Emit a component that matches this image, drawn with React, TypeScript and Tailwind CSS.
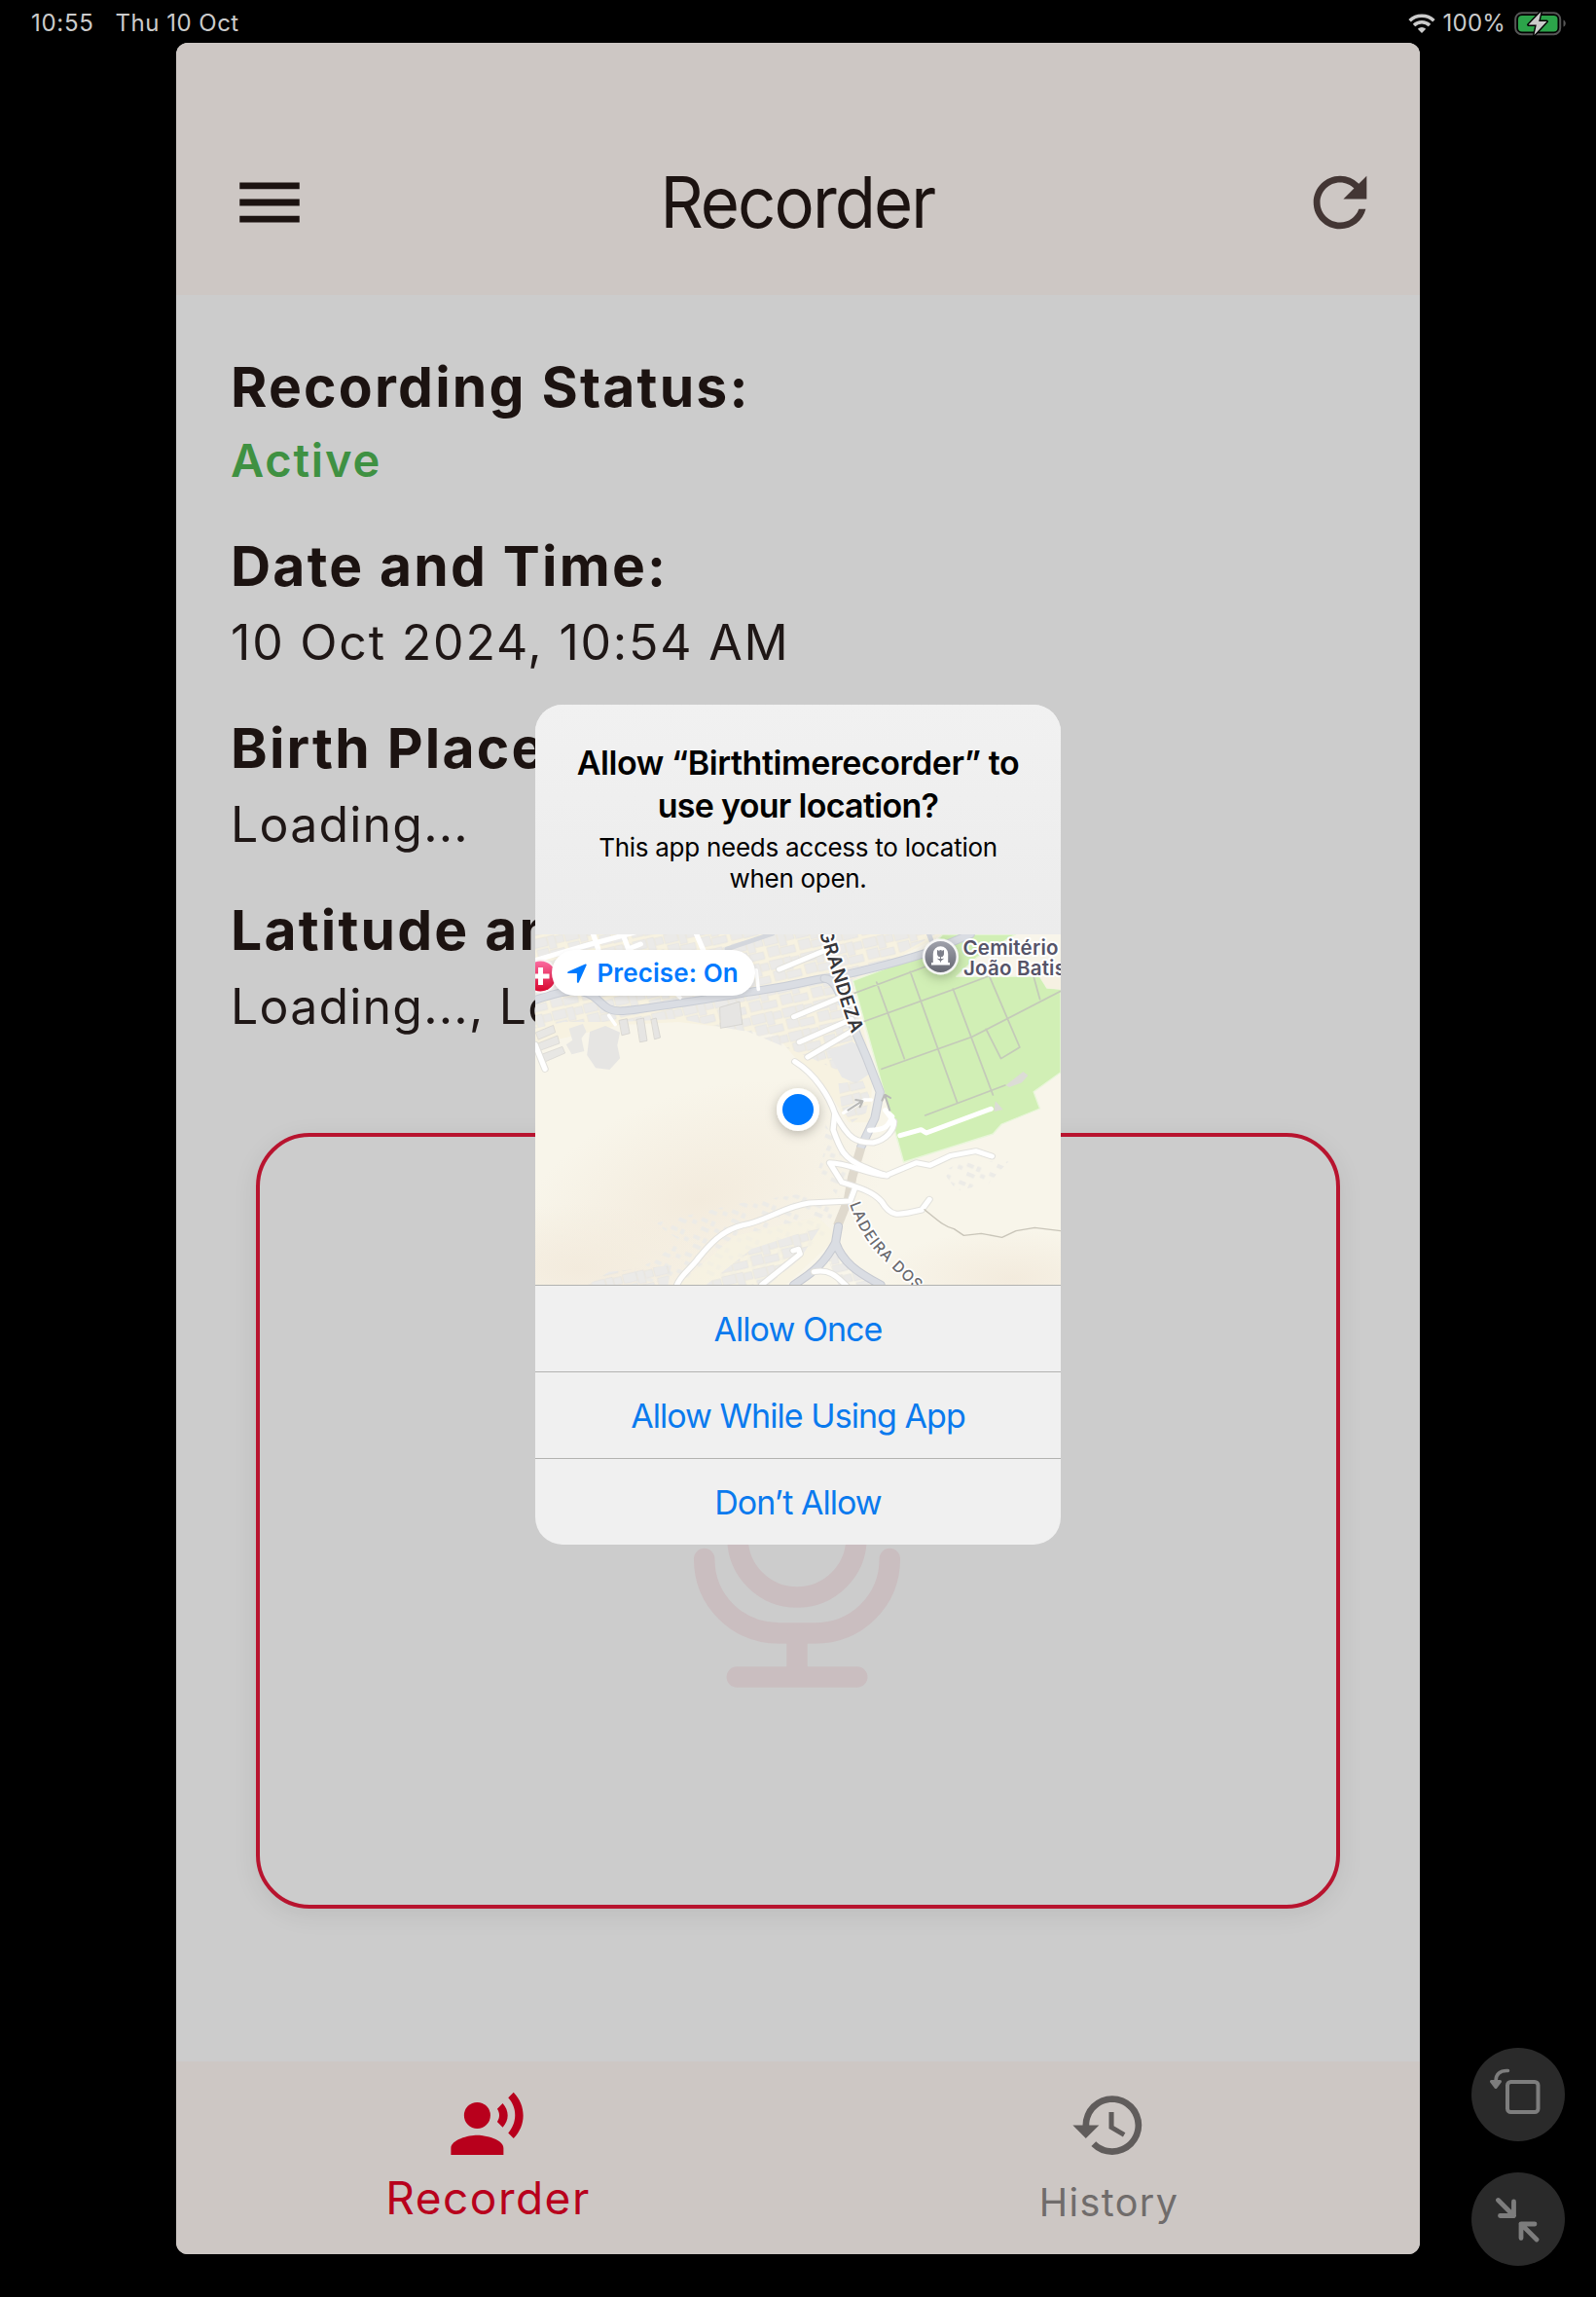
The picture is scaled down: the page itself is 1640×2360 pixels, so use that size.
import type { ReactNode } from "react";

function StatusBar() {
  return (
    <header className="flex h-11 w-full shrink-0 items-center justify-between pt-1 pr-[30px] pl-[32px] text-[24px] leading-[32px] text-[#cbcbcb]">
      <div className="flex gap-[22px]">
        <span className="tracking-[0.700px]">10:55</span>
        <span className="tracking-[0.500px]">Thu 10 Oct</span>
      </div>
      <div className="flex items-center">
        <svg className="h-[20px] w-[28px]" viewBox="0 0 28 20" fill="none">
          <path d="M1.600 7.200a18 18 0 0 1 24.800 0" stroke="#cbcbcb" strokeWidth="3.600" />
          <path d="M6 12a11.600 11.600 0 0 1 16 0" stroke="#cbcbcb" strokeWidth="3.600" />
          <path d="M14 20l-4.200-4.300a6 6 0 0 1 8.400 0z" fill="#cbcbcb" />
        </svg>
        <span className="ml-[8px] tracking-[0.200px]">100%</span>
        <svg className="ml-[9px] h-[26px] w-[54px]" viewBox="0 0 54 26">
          <rect x="1.200" y="2.200" width="46" height="22" rx="6.500" fill="none" stroke="#565656" strokeWidth="2" />
          <path d="M50.500 9.500c3 1 3 6 0 7z" fill="#565656" />
          <rect x="4" y="5" width="40.500" height="16.500" rx="4" fill="#2ca44a" />
          <path d="M27.500 1 14.500 14.500h8.300L20.500 25 33.500 11h-8.300z" fill="#cbcbcb" stroke="#000" strokeWidth="2.800" strokeLinejoin="round" paintOrder="stroke" />
        </svg>
      </div>
    </header>
  );
}

function AppBar() {
  return (
    <div className="flex h-[259px] shrink-0 items-end justify-between bg-[#cdc7c4] pr-[41px] pb-[54px] pl-[55px]">
      <svg className="h-[82px] w-[82px]" viewBox="0 0 24 24" fill="#1c1311">
        <path d="M3 18h18v-2H3zm0-5h18v-2H3zm0-7v2h18V6z" />
      </svg>
      <h1 className="mr-[15px] origin-center scale-x-95 text-[72.500px] leading-[82px] tracking-[-2px] text-[#1c1311]">Recorder</h1>
      <svg className="h-[82px] w-[82px]" viewBox="0 0 24 24" fill="#433634">
        <path d="M17.650 6.350A7.958 7.958 0 0 0 12 4c-4.420 0-7.990 3.580-7.990 8s3.570 8 7.990 8c3.730 0 6.840-2.550 7.730-6h-2.080A5.990 5.990 0 0 1 12 18c-3.310 0-6-2.690-6-6s2.690-6 6-6c1.660 0 3.140.690 4.220 1.780L13 11h7V4z" />
      </svg>
    </div>
  );
}

function Heading({ children }: { children: string }) {
  return <h2 className="text-[57px] leading-[65px] font-bold tracking-[2.200px] text-[#1c1311]">{children}</h2>;
}

function Details() {
  return (
    <section className="flex flex-col pt-[62px] pl-[56px] whitespace-nowrap text-[#1f1716]">
      <div className="h-[184px]">
        <Heading>Recording Status:</Heading>
        <p className="mt-[13px] text-[47px] leading-[60px] font-semibold tracking-[1.800px] text-[#3f9142]">Active</p>
      </div>
      <div className="h-[187px]">
        <Heading>Date and Time:</Heading>
        <p className="mt-[16px] text-[50px] leading-[60px] tracking-[1.800px]">10 Oct 2024, 10:54 AM</p>
      </div>
      <div className="h-[187px]">
        <Heading>Birth Place:</Heading>
        <p className="mt-[16px] text-[50px] leading-[60px] tracking-[1.200px]">Loading...</p>
      </div>
      <div className="h-[187px]">
        <Heading>Latitude and Longitude:</Heading>
        <p className="mt-[16px] text-[50px] leading-[60px] tracking-[1.200px]">Loading..., Loading...</p>
      </div>
    </section>
  );
}

function RecordCard() {
  return (
    <div className="mx-[82px] mt-[54px] flex h-[797px] shrink-0 items-end justify-center rounded-[55px] border-4 border-[#b8142f] bg-[#cccccc] pb-[223px] shadow-[0_6px_26px_rgba(0,0,0,0.08)]">
      <svg className="mr-[2px] h-[280px] w-[224px]" viewBox="0 0 224 280" fill="none" stroke="#cabec0" strokeWidth="21.500" strokeLinecap="round" strokeLinejoin="round">
        <path d="M51 60a61 61 0 0 1 122 0v66a61 61 0 0 1-122 0z" />
        <path d="M16.700 147.500c0 43 34 76.500 77 76.500h36.600c43 0 77-33.500 77-76.500" />
        <path d="M112 226v40M50.300 269h123.400" />
      </svg>
    </div>
  );
}

function NavItem({ icon, children }: { icon: ReactNode; children: ReactNode }) {
  return (
    <div className="flex w-1/2 flex-col items-center">
      {icon}
      {children}
    </div>
  );
}

function BottomNav() {
  return (
    <nav className="mt-auto flex h-[198px] shrink-0 bg-[#cdc7c4] pt-[25px]">
      <NavItem
        icon={
          <svg className="h-[81px] w-[81px]" viewBox="0 0 24 24" fill="#b8001c">
            <circle cx="9" cy="9" r="4" />
            <path d="M9 15c-2.670 0-8 1.340-8 4v2h16v-2c0-2.660-5.330-4-8-4zm7.760-9.640-1.680 1.690c.84 1.180.84 2.710 0 3.890l1.680 1.690c2.020-2.020 2.020-5.070 0-7.270zM20.070 2l-1.630 1.630c2.770 3.020 2.770 7.560 0 10.740L20.070 16c3.900-3.890 3.910-9.950 0-14z" />
          </svg>
        }
      >
        <span className="mt-[4px] ml-[2px] text-[46px] leading-[60px] tracking-[1.500px] text-[#b8001c]">Recorder</span>
      </NavItem>
      <NavItem
        icon={
          <svg className="h-[81px] w-[81px]" viewBox="0 0 24 24" fill="#605c5b">
            <path d="M13 3a9 9 0 0 0-9 9H1l3.890 3.890.07.14L9 12H6c0-3.870 3.130-7 7-7s7 3.130 7 7-3.130 7-7 7c-1.930 0-3.680-.790-4.940-2.060l-1.420 1.420A8.954 8.954 0 0 0 13 21a9 9 0 0 0 0-18zm-1 5v5l4.280 2.540.720-1.210-3.500-2.080V8z" />
          </svg>
        }
      >
        <span className="mt-[9px] text-[39.500px] leading-[60px] tracking-[1.400px] text-[#706c6b]">History</span>
      </NavItem>
    </nav>
  );
}

/* Roads and buildings share one coordinate space of 1512 x 1080 starting at (28, 60). */
function MapArt() {
  return (
    <svg className="absolute inset-0 h-full w-full" viewBox="28 60 1512 1080" preserveAspectRatio="none" fill="none" strokeLinejoin="round" strokeLinecap="round">
      <defs>
        <radialGradient id="hill" cx="0.500" cy="0.500" r="0.500">
          <stop offset="0" stopColor="#f3ebdd" />
          <stop offset="1" stopColor="#f3ebdd" stopOpacity="0" />
        </radialGradient>
        <pattern id="blocks" width="92" height="76" patternUnits="userSpaceOnUse" patternTransform="rotate(-14)">
          <path d="M2 4h38v28H2zM44 4h20v40H44zM67 8h22v22H67zM6 38h32v30H6zM42 48h42v22H42z" fill="#ebeae8" stroke="#e2e0dc" strokeWidth="1.500" />
        </pattern>
        <pattern id="specks" width="70" height="58" patternUnits="userSpaceOnUse" patternTransform="rotate(24)">
          <path d="M4 6h20v12H4zM34 4h12v16H34zM52 22h14v12H52zM14 32h24v12H14z" fill="#ecebe7" />
        </pattern>
      </defs>
      <rect x="28" y="60" width="1512" height="1080" fill="#f8f5ea" />
      <ellipse cx="500" cy="880" rx="560" ry="330" fill="url(#hill)" transform="rotate(-22 500 880)" />
      <ellipse cx="150" cy="1090" rx="420" ry="200" fill="url(#hill)" />
      <ellipse cx="1400" cy="1120" rx="380" ry="150" fill="url(#hill)" />

      <path d="M28 60H1200L940 205 1000 480 990 640 930 640 880 560 800 470 720 370 560 345 440 330 270 340 28 400z" fill="#f7f2e1" />
      <path d="M28 60H1180L940 200 975 430 960 500 900 480 820 440 640 360 560 345 440 320 270 330 110 330 28 350z" fill="url(#blocks)" />
      <path d="M870 420l70-30 45 40 5 60-40 30-40-20z" fill="#e8e8e8" />
      <path d="M185 360l45-18 42 20-8 40 8 40-30 35-40-5-25-40z" fill="#e6e5e3" />
      <path d="M125 350l40-14 10 24-14 20 8 40-36 10-16-30 18-14z" fill="#e8e7e4" />
      <path d="M270 325l22-5 8 45-22 6zM320 322l20-4 10 70-20 4zM362 322l14-4 12 60-16 5zM560 285l56-18 8 70-62 12z" fill="#e6e5e3" stroke="#cfcdc9" strokeWidth="2" />
      <path d="M30 362l50-22 6 22-48 22zM36 396l56-24 6 24-56 22zM46 430l60-24 8 20-56 26z" fill="#e8e7e4" stroke="#cfcdc9" strokeWidth="1.500" />
      <path d="M900 520l70-10 20 50-10 50-40 30-30-40z" fill="url(#blocks)" />
      <path d="M860 640l60 110 20 110-40 10-60-80 20-60z" fill="url(#specks)" />
      <path d="M1200 790l60-30 130 0-60 70-90 20z" fill="url(#specks)" />
      <path d="M230 1140l150-80 60-60-70-50 240-60 180-30 100 40-30 100-200 110z" fill="url(#specks)" />
      <path d="M440 1140l160-150 240-60 60 60-150 150z" fill="#f7f2e1" opacity="0.700" />
      <path d="M520 1140l130-110 200-70-60 100-90 80z" fill="url(#blocks)" />
      <path d="M900 1140l-30-80 30-30 110 110z" fill="url(#blocks)" />
      <path d="M180 1140l60-40 180-20-10 60z" fill="url(#blocks)" />

      <path d="M942 203 1150 120 1200 60H1410L1300 130 1240 190 1480 190 1500 225 1540 228V485L1462 545 1480 597 1370 645 1345 675 1088 762 1060 655z" fill="#d1efb5" stroke="#e9f6da" strokeWidth="4" />
      <path d="M1478 188l62-50v92l-40-4z" fill="#f6f1e2" />
      <path d="M942 243 1150 160M970 330 1230 230 1330 190M1025 475 1285 376 1540 235M1150 618 1380 525M1010 207 1090 443M1107 175 1242 578M1230 228 1345 555M1335 190 1422 408 1368 443 1325 352M1462 190 1480 260" stroke="#c4cab9" strokeWidth="5" />
      <path d="M1382 525l50-42 14 12-18 22-36 14zM1352 574l22 26-26 6z" fill="#dcdcd6" />

      <path d="M28 262C90 240 140 225 180 242S220 300 280 296 560 252 680 232 820 200 860 196 1060 150 1150 118L1280 60" stroke="#c9cdd5" strokeWidth="26" />
      <path d="M28 262C90 240 140 225 180 242S220 300 280 296 560 252 680 232 820 200 860 196 1060 150 1150 118L1280 60" stroke="#dadde3" strokeWidth="20" />
      <path d="M580 105 710 58M1160 58l18 50" stroke="#d4d7dd" strokeWidth="14" />
      <path d="M860 196c30 0 45 50 60 90l60 150 40 110-15 80-40 90" stroke="#cacdd4" strokeWidth="26" />
      <path d="M860 196c30 0 45 50 60 90l60 150 40 110-15 80-40 90" stroke="#dcdfe4" strokeWidth="20" />
      <path d="M965 718l-25 90-12 70-30 80" stroke="#dfd9cd" strokeWidth="26" strokeLinecap="butt" />
      <path d="M900 960l-8 50c20 60 60 90 130 130M892 1010c-30 60-60 90-120 130" stroke="#c6c9d1" strokeWidth="26" />
      <path d="M900 960l-8 50c20 60 60 90 130 130M892 1010c-30 60-60 90-120 130" stroke="#dadde3" strokeWidth="20" />

      <g stroke="#e2e1dc" strokeWidth="21">
        <path d="M436 1140c10-30 40-50 60-80 30-40 70-90 130-104 60-10 120-58 190-68l118-6 14-40" />
        <path d="M775 452c60 40 100 110 115 160l-5 50c20 60 30 90 90 115 30 15 60 25 65 25l84-38 40 8 60-30 72-14 46 16" />
        <path d="M890 612c40 80 60 90 110 90 40-10 60-40 60-65" />
        <path d="M1040 804c-60-5-110-40-165-40l35 60c60 20 90 30 115 60 25 45 40 45 115 25l22-32" />
        <path d="M28 400l28 75M730 168l140-62M772 314l140-62M788 392l150-70M812 438l140-88" />
        <path d="M680 1140l110-95-5-15-15 5M830 1100c50-10 70 20 95 45" />
      </g>
      <g stroke="#ffffff" strokeWidth="15">
        <path d="M28 400l28 75M28 140l160-50 140-40M195 60l14 45M280 60l16 45 35-15M492 60l20 50M730 168l140-62M772 314l140-62M788 392l150-70M812 438l140-88" />
        <path d="M664 170l6 60M425 235l20 20M240 310l18 28" strokeWidth="10" />
        <path d="M436 1140c10-30 40-50 60-80 30-40 70-90 130-104 60-10 120-58 190-68l118-6 14-40" />
        <path d="M775 452c60 40 100 110 115 160l-5 50c20 60 30 90 90 115 30 15 60 25 65 25l84-38 40 8 60-30 72-14 46 16" />
        <path d="M890 612c40 80 60 90 110 90 40-10 60-40 60-65l-25-35 20 20c-10 30-20 40-65 42" />
        <path d="M915 610l60-40 20 0" strokeWidth="10" />
        <path d="M1040 804c-60-5-110-40-165-40l35 60c60 20 90 30 115 60 25 45 40 45 115 25l22-32" />
        <path d="M1078 680l60-18 15 10 186-74" />
        <path d="M680 1140l110-95-5-15-15 5M830 1100c50-10 70 20 95 45" />
      </g>
      <path d="M1148 908c40 35 60 55 85 60l28 20 50-6 60 12 40-20 54-10 75 10" stroke="#c9c5b9" strokeWidth="4" />
      <path d="M928 602l40-28M950 570l20 4-8 18M1048 602l-14-46M1026 572l8-18 16 10" stroke="#b9b9b7" strokeWidth="6" />
    </svg>
  );
}

function MapLabels() {
  return (
    <svg className="absolute inset-0 h-full w-full font-['Inter']" viewBox="0 0 540 360">
      <defs>
        <path id="street-a" d="M291.500 -3 Q302 30 311 60 T337 132" />
        <path id="street-b" d="M323 277 Q334 309 352 328 T402 375" />
        <linearGradient id="hospital" x1="0" y1="0" x2="0" y2="1">
          <stop offset="0" stopColor="#fb6ba0" />
          <stop offset="1" stopColor="#d8062e" />
        </linearGradient>
        <linearGradient id="grave" x1="0" y1="0" x2="0" y2="1">
          <stop offset="0" stopColor="#9fa1ab" />
          <stop offset="1" stopColor="#666873" />
        </linearGradient>
        <filter id="soft" x="-50%" y="-50%" width="200%" height="200%">
          <feDropShadow dx="0" dy="3" stdDeviation="6" floodOpacity="0.250" />
        </filter>
      </defs>
      <text fontSize="19" fontWeight="600" fill="#36363a" stroke="#fff" strokeWidth="4" strokeLinejoin="round" paintOrder="stroke" letterSpacing="0.600">
        <textPath href="#street-a">GRANDEZA</textPath>
      </text>
      <text fontSize="15.500" fontWeight="500" fill="#6a6a6e" stroke="#fff" strokeWidth="3.500" strokeLinejoin="round" paintOrder="stroke" letterSpacing="1.150">
        <textPath href="#street-b">LADEIRA DOS</textPath>
      </text>
      <g fontSize="20.500" fontWeight="600" fill="#565468" stroke="#fff" strokeWidth="4" strokeLinejoin="round" paintOrder="stroke">
        <text x="439.500" y="20.500" letterSpacing="0.200">Cemitério</text>
        <text x="440" y="42" letterSpacing="0.200">João Batis</text>
      </g>
      <g filter="url(#soft)">
        <circle cx="416.500" cy="23" r="18.500" fill="#f6f6f6" />
      </g>
      <circle cx="416.500" cy="23" r="16" fill="url(#grave)" />
      <path d="M408.800 29V20a7.700 7.700 0 0 1 15.400 0v9h1.800v2.500h-19V29z" fill="#fff" />
      <path d="M413.500 16.500l1.500 1 1.500-1.500 1.500 1.500 1.500-1v3.500a3 3 0 0 1-6 0zM416.500 22v6.500M413.500 25l3 2 3-2" fill="#7d7f8a" stroke="#7d7f8a" strokeWidth="1" />
      <circle cx="5.500" cy="43" r="17.500" fill="#f9f3f3" />
      <circle cx="5.500" cy="43" r="15.500" fill="url(#hospital)" />
      <path d="M5.500 34v18M-3.500 43h18" stroke="#fff" strokeWidth="5" />
      <circle cx="270" cy="180" r="22" fill="#fff" filter="url(#soft)" />
      <circle cx="270" cy="180" r="16" fill="#007aff" />
    </svg>
  );
}

function MapPreview() {
  return (
    <div className="relative h-[360px] shrink-0 overflow-hidden">
      <MapArt />
      <MapLabels />
      <div className="absolute top-4 left-[17px] flex h-[47px] w-[209px] items-center rounded-full bg-white pl-[16px] shadow-[0_2px_5px_rgba(0,0,0,0.1)]">
        <svg className="h-5 w-5" viewBox="0 0 20 20" fill="#007aff">
          <path d="M18.400.6c1-.4 1.600.2 1.200 1.200l-7.800 17.400c-.5 1-1.900.8-1.900-.4V10.600c0-.3-.2-.5-.5-.5H1.200C0 10.100-.2 8.700.8 8.200z" />
        </svg>
        <span className="ml-[10.500px] text-[26px] leading-[32px] font-semibold tracking-[0.100px] whitespace-nowrap text-[#007aff]">Precise: On</span>
      </div>
    </div>
  );
}

function PermissionDialog() {
  return (
    <div className="absolute top-[680px] left-[369px] flex h-[863px] w-[540px] flex-col overflow-hidden rounded-[28px] bg-[#f0f0f0]">
      <div className="flex h-[236px] shrink-0 flex-col items-center bg-linear-to-b from-[#f1f1f1] to-[#ececec] pt-[38px] text-black">
        <div className="text-center text-[34px] leading-[44px] font-semibold">
          <p className="tracking-[-0.420px]">Allow “Birthtimerecorder” to</p>
          <p className="tracking-[-0.700px]">use your location?</p>
        </div>
        <div className="mt-[5px] text-center text-[26px] leading-[32px]">
          <p className="tracking-[-0.270px]">This app needs access to location</p>
          <p className="tracking-[-0.300px]">when open.</p>
        </div>
      </div>
      <MapPreview />
      {["Allow Once", "Allow While Using App", "Don’t Allow"].map((t) => (
        <button key={t} className="flex h-[89px] shrink-0 items-center justify-center border-t border-[#b2b2b0] pt-px text-[34px] leading-[40px] tracking-[-0.950px] text-[#0a7aee]">
          {t}
        </button>
      ))}
    </div>
  );
}

function FloatingButtons() {
  return (
    <div className="flex flex-1 flex-col items-end justify-end gap-8 pr-8 pb-8">
      <button className="flex size-24 items-center justify-center rounded-full bg-[#2a2a2a]">
        <svg className="size-24" viewBox="0 0 96 96" fill="none" stroke="#7d7d7d" strokeWidth="4" strokeLinecap="round" strokeLinejoin="round">
          <rect x="37" y="35" width="31.500" height="31" rx="3.500" />
          <path d="M37.500 23.500C29 23 25 27.500 25 34" strokeWidth="3.500" />
          <path d="M20.500 34.500h9L25 40.500z" fill="#7d7d7d" strokeWidth="3" />
        </svg>
      </button>
      <button className="flex size-24 items-center justify-center rounded-full bg-[#2a2a2a]">
        <svg className="size-24" viewBox="0 0 96 96" fill="none" stroke="#7d7d7d" strokeWidth="4.800" strokeLinecap="round" strokeLinejoin="round">
          <path d="M27.500 28.500 43.500 44.500M43.500 30v14.500H29.500M67 69 51 53M51 67.500V53H65" />
        </svg>
      </button>
    </div>
  );
}

export default function App() {
  return (
    <div className="flex h-[2360px] w-[1640px] flex-col bg-black font-['Inter',sans-serif]">
      <StatusBar />
      <div className="flex flex-1 pl-[181px]">
        <main className="relative flex h-[2272px] w-[1278px] shrink-0 flex-col overflow-hidden rounded-[12px] bg-[#cccccc]">
          <AppBar />
          <Details />
          <RecordCard />
          <BottomNav />
          <PermissionDialog />
        </main>
        <FloatingButtons />
      </div>
    </div>
  );
}
